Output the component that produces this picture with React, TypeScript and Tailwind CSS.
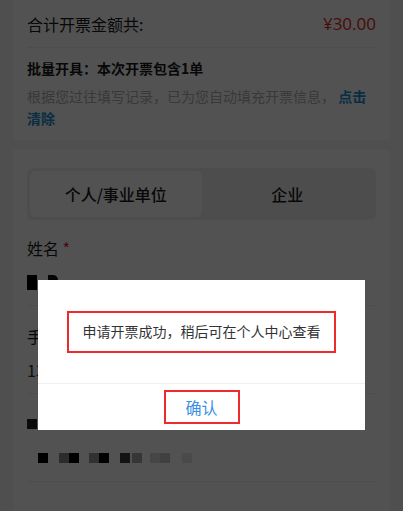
import React from "react";

const cjk = { fontFamily: '"Noto Sans CJK SC", "Noto Sans", sans-serif' };

// mosaic squares that hide the third field's value
const pixels = [
    { x: 38, c: "#000" },
    { x: 59, c: "#8a8a8a" },
    { x: 69, c: "#000" },
    { x: 89, c: "#9a9a9a" },
    { x: 99, c: "#000" },
    { x: 120, c: "#3c3c3c" },
    { x: 132, c: "#a8a8a8" },
    { x: 150, c: "#d8d8d8" },
    { x: 160, c: "#c8c8c8" },
    { x: 182, c: "#e6e6e6" },
];

export default function App() {
    return (
        <div className="relative flex h-[511px] w-[403px] flex-col overflow-hidden bg-[#f6f6f6]" style={cjk}>
            {/* summary card */}
            <section className="mx-[13px] bg-white px-[14px] pb-[11px]">
                <div className="flex h-[48px] items-center justify-between border-b border-[#eeeeee]">
                    <span className="text-[16px] text-[#1a1a1a]">合计开票金额共:</span>
                    <span className="text-[17px] text-[#e0262b]" style={{ fontFamily: '"Open Sans", "Noto Sans", sans-serif' }}>¥30.00</span>
                </div>
                <p className="mt-[10px] text-[14px] leading-[20px] font-bold text-[#1a1a1a]">批量开具：本次开票包含1单</p>
                <p className="mt-[7px] text-[14px] leading-[22px] text-[#b0b0b0]">
                    根据您过往填写记录，已为您自动填充开票信息， <span className="font-bold text-[#1a8fd0]">点击清除</span>
                </p>
            </section>

            {/* form card */}
            <section className="mx-[13px] mt-[10px] flex-1 bg-white px-[14px] pt-[18px]">
                <div className="flex h-[52px] rounded-md bg-[#f0f0f0] p-[3px]">
                    <div className="flex flex-1 items-center justify-center rounded-md bg-white text-[16px] font-medium text-[#1a1a1a]">个人/事业单位</div>
                    <div className="flex flex-1 items-center justify-center text-[16px] font-medium text-[#1a1a1a]">企业</div>
                </div>

                <div className="border-b border-[#eeeeee] pt-[18px] pb-[11px]">
                    <div className="text-[16px] leading-[20px] text-[#1a1a1a]">
                        姓名 <span className="text-[#e0262b]">*</span>
                    </div>
                    <div className="mt-[12px] flex h-[24px] items-center gap-[11px]">
                        <div className="h-[15px] w-[10px] bg-black" />
                        <div className="h-[15px] w-[10px] rounded-tr-[5px] bg-[#111]" />
                    </div>
                </div>

                <div className="border-b border-[#eeeeee] pt-[20px] pb-[11px]">
                    <div className="text-[16px] leading-[20px] text-[#1a1a1a]">手机号</div>
                    <div className="mt-[12px] h-[24px] text-[16px] leading-[24px] text-[#333]">13800001234</div>
                </div>

                <div className="border-b border-[#eeeeee] pt-[20px] pb-[11px]">
                    <div className="flex h-[20px] items-center">
                        <div className="h-[10px] w-[10px] bg-[#222]" />
                    </div>
                    <div className="relative mt-[12px] h-[24px]">
                        {pixels.map((p) => (
                            <div key={p.x} className="absolute top-[7px] h-[10px] w-[10px]" style={{ left: p.x - 27, background: p.c }} />
                        ))}
                    </div>
                </div>
            </section>

            {/* dim overlay */}
            <div className="absolute inset-0 bg-black/[0.68]" />

            {/* dialog */}
            <div className="absolute top-[280px] left-[38px] w-[327px] bg-white">
                <div className="flex h-[103px] items-center justify-center">
                    <div className="flex h-[42px] w-[269px] items-center justify-center border-2 border-[#f02a2a]">
                        <span className="text-[14px] text-[#333]">申请开票成功，稍后可在个人中心查看</span>
                    </div>
                </div>
                <div className="flex h-[47px] items-center justify-center border-t border-[#efefef]">
                    <div className="flex h-[34px] w-[76px] items-center justify-center border-2 border-[#f02a2a]">
                        <span className="text-[16px] text-[#3a8ee6]">确认</span>
                    </div>
                </div>
            </div>
        </div>
    );
}
